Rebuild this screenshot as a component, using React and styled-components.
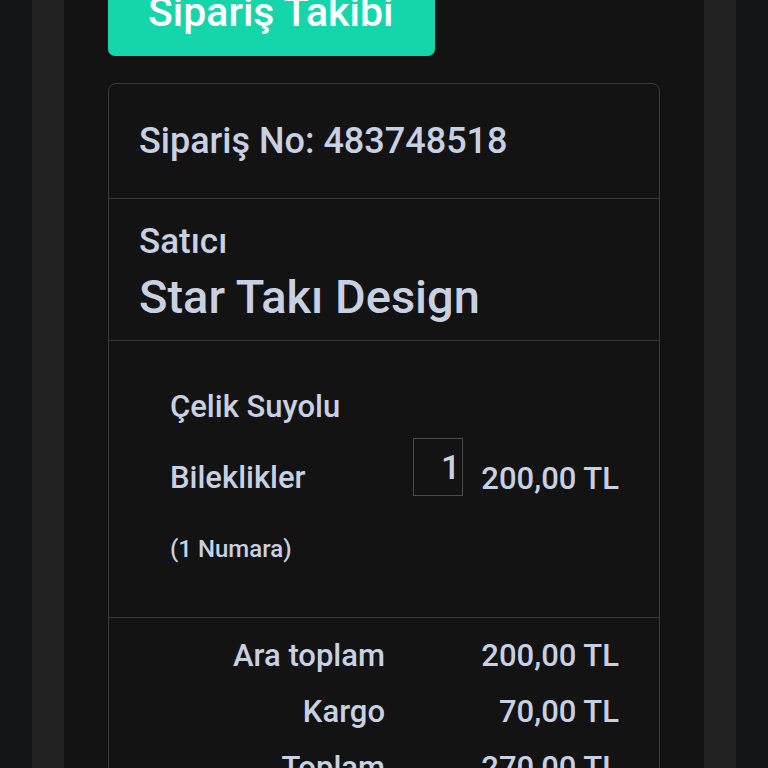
import React from "react"
import styled, { createGlobalStyle } from "styled-components"

const Global = createGlobalStyle`
  html, body {
    margin: 0;
    background: #131418;
    font-family: Roboto, "Liberation Sans", sans-serif;
    overflow: hidden;
  }
`

const Page = styled.div`
  height: 768px;
  padding: 0 32px;
  box-sizing: border-box;
`

const Shell = styled.div`
  height: 100%;
  background: #202120;
  padding: 0 32px;
`

const Content = styled.main`
  height: 100%;
  background: #131313;
  padding: 0 44px;
  overflow: hidden;
`

const TrackButton = styled.button`
  display: block;
  margin-top: -32px;
  padding: 20px 0 20px 40px;
  border: none;
  border-radius: 7px;
  background: #15d6ab;
  color: #ffffff;
  font-family: Roboto, "Liberation Sans", sans-serif;
  font-size: 41px;
  font-weight: 500;
  line-height: 48px;
  width: 327px;
  text-align: left;
  white-space: nowrap;
`

const Card = styled.section`
  margin-top: 27px;
  border: 1px solid #3a3a3a;
  border-radius: 8px;
  color: #c8d1e3;
`

const Section = styled.div`
  border-top: ${(p) => (p.$first ? "none" : "1px solid #3a3a3a")};
`

const OrderNo = styled.h2`
  margin: 0;
  padding: 36px 30px;
  font-size: 36px;
  font-weight: 500;
  line-height: 42px;
`

const Seller = styled.div`
  padding: 23px 30px 16px;
  display: flex;
  flex-direction: column;
  gap: 8px;
`

const SellerLabel = styled.span`
  font-size: 35px;
  font-weight: 500;
  line-height: 40px;
`

const SellerName = styled.span`
  font-size: 47px;
  font-weight: 500;
  line-height: 54px;
`

const ItemRow = styled.div`
  display: flex;
  align-items: center;
  padding: 30px 40px 31px 61px;
`

const ItemName = styled.div`
  flex: 1;
  font-size: 31px;
  font-weight: 500;
  line-height: 71px;
`

const NameText = styled.div`
  width: 220px;
`

const Variant = styled.div`
  font-size: 24px;
  line-height: 73px;
`

const Qty = styled.div`
  width: 50px;
  height: 58px;
  box-sizing: border-box;
  border: 1px solid #4a4a4a;
  margin-bottom: 24px;
  padding-right: 2px;
  font-size: 34px;
  font-weight: 500;
  line-height: 56px;
  text-align: right;
`

const Price = styled.div`
  margin-left: 18px;
  font-size: 31px;
  font-weight: 500;
  white-space: nowrap;
`

const Totals = styled.div`
  display: grid;
  grid-template-columns: 1fr 234px;
  padding: 10px 40px 0 0;
  font-size: 31px;
  font-weight: 500;
  line-height: 56px;
  text-align: right;
`

const totals = [
  ["Ara toplam", "200,00 TL"],
  ["Kargo", "70,00 TL"],
  ["Toplam", "270,00 TL"],
]

export default function App() {
  return (
    <>
      <Global />
      <Page>
        <Shell>
          <Content>
            <TrackButton>Sipariş Takibi</TrackButton>
            <Card>
              <Section $first>
                <OrderNo>Sipariş No: 483748518</OrderNo>
              </Section>
              <Section>
                <Seller>
                  <SellerLabel>Satıcı</SellerLabel>
                  <SellerName>Star Takı Design</SellerName>
                </Seller>
              </Section>
              <Section>
                <ItemRow>
                  <ItemName>
                    <NameText>Çelik Suyolu Bileklikler</NameText>
                    <Variant>(1 Numara)</Variant>
                  </ItemName>
                  <Qty>1</Qty>
                  <Price>200,00 TL</Price>
                </ItemRow>
              </Section>
              <Section>
                <Totals>
                  {totals.map(([label, value]) => (
                    <React.Fragment key={label}>
                      <span>{label}</span>
                      <span>{value}</span>
                    </React.Fragment>
                  ))}
                </Totals>
              </Section>
            </Card>
          </Content>
        </Shell>
      </Page>
    </>
  )
}
